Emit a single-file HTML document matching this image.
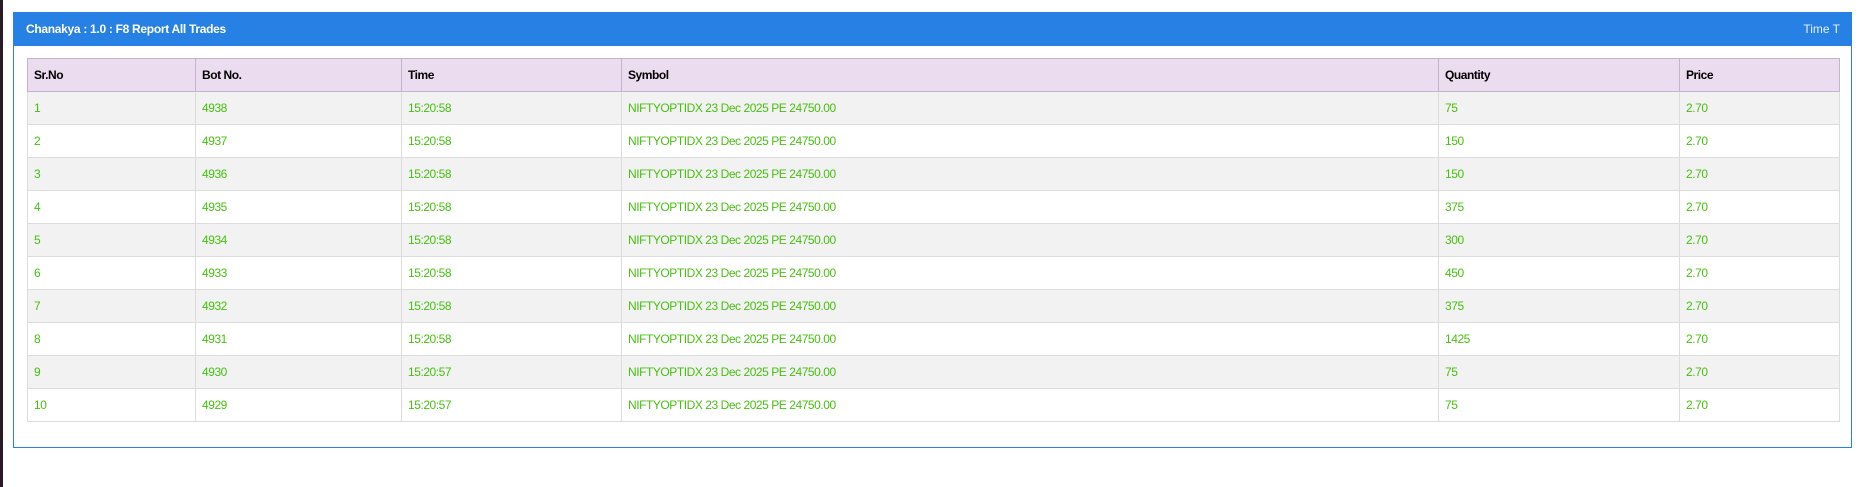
<!DOCTYPE html>
<html><head><style>
body{margin:0;width:1862px;height:487px;background:#fff;font-family:"Liberation Sans",sans-serif;position:relative;overflow:hidden}
.strip{position:absolute;left:0;top:0;width:3px;height:487px;background:#2a1b26}
.panel{position:absolute;left:13px;top:12px;width:1837px;height:434px;border:1px solid #2780e3}
.hd{height:33px;background:#2780e3;color:#fff;font-size:12px;line-height:33px;padding:0 12px;position:relative}
.hd b{font-weight:bold;letter-spacing:-0.3px}
.hd span{position:absolute;right:11px;top:0;color:#e6f0fb}
table{position:absolute;left:13px;top:45px;width:1812px;border-collapse:collapse;font-size:12px;letter-spacing:-0.45px;table-layout:fixed}
th,td{height:32px;padding:0 0 0 6px;text-align:left;border:1px solid #dcdcdc}
th{background:#ebdcf0;border-color:#c3b4cb;color:#000;font-weight:bold}
td{color:#47bf10}
tr:nth-child(even) td{background:#f2f2f2}
</style></head><body>
<div class="strip"></div>
<div class="panel">
<div class="hd"><b>Chanakya : 1.0 : F8 Report All Trades</b><span>Time T</span></div>
<table>
<colgroup><col style="width:168px"><col style="width:206px"><col style="width:220px"><col style="width:817px"><col style="width:241px"><col style="width:160px"></colgroup>
<tr><th>Sr.No</th><th>Bot No.</th><th>Time</th><th>Symbol</th><th>Quantity</th><th>Price</th></tr>
<tr><td>1</td><td>4938</td><td>15:20:58</td><td>NIFTYOPTIDX 23 Dec 2025 PE 24750.00</td><td>75</td><td>2.70</td></tr>
<tr><td>2</td><td>4937</td><td>15:20:58</td><td>NIFTYOPTIDX 23 Dec 2025 PE 24750.00</td><td>150</td><td>2.70</td></tr>
<tr><td>3</td><td>4936</td><td>15:20:58</td><td>NIFTYOPTIDX 23 Dec 2025 PE 24750.00</td><td>150</td><td>2.70</td></tr>
<tr><td>4</td><td>4935</td><td>15:20:58</td><td>NIFTYOPTIDX 23 Dec 2025 PE 24750.00</td><td>375</td><td>2.70</td></tr>
<tr><td>5</td><td>4934</td><td>15:20:58</td><td>NIFTYOPTIDX 23 Dec 2025 PE 24750.00</td><td>300</td><td>2.70</td></tr>
<tr><td>6</td><td>4933</td><td>15:20:58</td><td>NIFTYOPTIDX 23 Dec 2025 PE 24750.00</td><td>450</td><td>2.70</td></tr>
<tr><td>7</td><td>4932</td><td>15:20:58</td><td>NIFTYOPTIDX 23 Dec 2025 PE 24750.00</td><td>375</td><td>2.70</td></tr>
<tr><td>8</td><td>4931</td><td>15:20:58</td><td>NIFTYOPTIDX 23 Dec 2025 PE 24750.00</td><td>1425</td><td>2.70</td></tr>
<tr><td>9</td><td>4930</td><td>15:20:57</td><td>NIFTYOPTIDX 23 Dec 2025 PE 24750.00</td><td>75</td><td>2.70</td></tr>
<tr><td>10</td><td>4929</td><td>15:20:57</td><td>NIFTYOPTIDX 23 Dec 2025 PE 24750.00</td><td>75</td><td>2.70</td></tr>
</table>
</div>
</body></html>
